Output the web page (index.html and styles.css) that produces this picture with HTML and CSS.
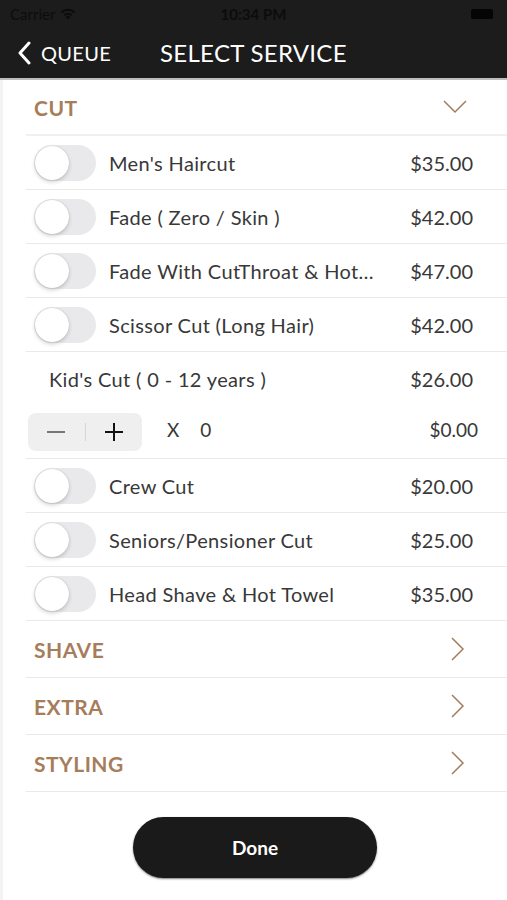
FILE: index.html
```html
<!DOCTYPE html>
<html lang="en">
<head>
    <meta charset="UTF-8">
    <title>Select Service</title>
    <link rel="stylesheet" href="styles.css">
</head>
<body>
    <div class="topbar">
        <div class="status">
            <span class="carrier">Carrier
                <svg class="wifi" width="16" height="12" viewBox="0 0 16 12"><path d="M8 11.5l2.2-2.6a3.2 3.2 0 0 0-4.4 0z M3.6 6.6l1.4 1.5a4.3 4.3 0 0 1 6 0l1.4-1.5a6.4 6.4 0 0 0-8.8 0z M0.8 3.7l1.4 1.5a8.3 8.3 0 0 1 11.6 0l1.4-1.5a10.4 10.4 0 0 0-14.4 0z" fill="#0c0c0c"/></svg>
            </span>
            <span class="clock">10:34 PM</span>
            <span class="battery"></span>
        </div>
        <div class="nav">
            <div class="back">
                <svg width="14" height="24" viewBox="0 0 14 24"><path d="M12 2L3 12l9 10" fill="none" stroke="#fff" stroke-width="3" stroke-linecap="round" stroke-linejoin="round"/></svg>
                <span>QUEUE</span>
            </div>
            <div class="nav-title">SELECT SERVICE</div>
        </div>
    </div>

    <div class="content">
        <div class="list">
            <div class="section">
                <span>CUT</span>
                <svg class="chev" width="24" height="14" viewBox="0 0 24 14"><path d="M1 1l11 11L23 1" fill="none" stroke="#a67d5b" stroke-width="1.5"/></svg>
            </div>

            <div class="item"><span class="switch"></span><span class="name">Men's Haircut</span><span class="price">$35.00</span></div>
            <div class="item"><span class="switch"></span><span class="name">Fade ( Zero / Skin )</span><span class="price">$42.00</span></div>
            <div class="item"><span class="switch"></span><span class="name">Fade With CutThroat &amp; Hot…</span><span class="price">$47.00</span></div>
            <div class="item"><span class="switch"></span><span class="name">Scissor Cut (Long Hair)</span><span class="price">$42.00</span></div>

            <div class="kids">
                <div class="kids-head"><span class="name">Kid's Cut ( 0 - 12 years )</span><span class="price">$26.00</span></div>
                <div class="kids-qty">
                    <div class="stepper">
                        <span class="minus"></span>
                        <span class="divider"></span>
                        <span class="plus"></span>
                    </div>
                    <span class="times">X</span>
                    <span class="count">0</span>
                    <span class="total">$0.00</span>
                </div>
            </div>

            <div class="item"><span class="switch"></span><span class="name">Crew Cut</span><span class="price">$20.00</span></div>
            <div class="item"><span class="switch"></span><span class="name">Seniors/Pensioner Cut</span><span class="price">$25.00</span></div>
            <div class="item"><span class="switch"></span><span class="name">Head Shave &amp; Hot Towel</span><span class="price">$35.00</span></div>

            <div class="section">
                <span>SHAVE</span>
                <svg class="chev-r" width="14" height="24" viewBox="0 0 14 24"><path d="M1 1l11 11L1 23" fill="none" stroke="#a67d5b" stroke-width="1.5"/></svg>
            </div>
            <div class="section">
                <span>EXTRA</span>
                <svg class="chev-r" width="14" height="24" viewBox="0 0 14 24"><path d="M1 1l11 11L1 23" fill="none" stroke="#a67d5b" stroke-width="1.5"/></svg>
            </div>
            <div class="section">
                <span>STYLING</span>
                <svg class="chev-r" width="14" height="24" viewBox="0 0 14 24"><path d="M1 1l11 11L1 23" fill="none" stroke="#a67d5b" stroke-width="1.5"/></svg>
            </div>
        </div>

        <div class="footer">
            <button class="done">Done</button>
        </div>
    </div>
</body>
</html>
```

FILE: styles.css
```css
* {
    margin: 0;
    padding: 0;
    box-sizing: border-box;
    font-family: 'Lato', 'Noto Sans', sans-serif;
}

body {
    width: 507px;
    height: 900px;
    background: #fff;
    overflow: hidden;
}

.topbar {
    background: #1c1c1c;
    border-bottom: 2px solid #bdbdbd;
}

.status {
    height: 27px;
    display: flex;
    align-items: center;
    justify-content: space-between;
    padding: 0 10px;
    color: #0c0c0c;
    font-size: 15px;
}

.carrier {
    display: flex;
    align-items: center;
    gap: 5px;
    width: 110px;
}

.clock {
    font-weight: bold;
}

.battery {
    width: 110px;
    display: flex;
    justify-content: flex-end;
}

.battery::after {
    content: '';
    width: 22px;
    height: 10px;
    background: #050505;
    border-radius: 2px;
    margin-right: 4px;
}

.nav {
    height: 51px;
    display: flex;
    align-items: center;
    color: #fff;
    padding-left: 17px;
}

.back {
    display: flex;
    align-items: center;
    gap: 10px;
    font-size: 20px;
    letter-spacing: 0.3px;
    width: 143px;
}

.nav-title {
    font-size: 24px;
    letter-spacing: 0.3px;
}

.content {
    border-left: 3px solid #f3f3f3;
    height: 821px;
}

.list {
    padding-left: 23px;
}

.section {
    height: 57px;
    display: flex;
    align-items: center;
    justify-content: space-between;
    padding: 0 42px 0 8px;
    border-bottom: 1px solid #e9e9e9;
    color: #a67d5b;
    font-size: 21px;
    font-weight: bold;
    letter-spacing: 0.5px;
}

.section:first-child {
    height: 56px;
    border-bottom-width: 2px;
    border-bottom-color: #f0f0f0;
}

.chev {
    margin-right: -2px;
}

.item,
.kids-head,
.kids-qty {
    display: flex;
    align-items: center;
    font-size: 20px;
    color: #383838;
}

.item {
    height: 54px;
    padding: 0 34px 0 8px;
    border-bottom: 1px solid #e9e9e9;
}

.switch {
    width: 62px;
    height: 36px;
    border-radius: 18px;
    background: #e9e9eb;
    position: relative;
    flex-shrink: 0;
    margin-right: 13px;
}

.switch::after {
    content: '';
    position: absolute;
    left: 1px;
    top: 1px;
    width: 34px;
    height: 34px;
    border-radius: 50%;
    background: #fff;
    box-shadow: 0 2px 4px rgba(0,0,0,0.18), 0 0 1px rgba(0,0,0,0.2);
}

.name {
    flex: 1;
    white-space: nowrap;
    padding-right: 16px;
    letter-spacing: 0.35px;
}

.price {
    flex-shrink: 0;
}

.kids {
    border-bottom: 1px solid #e9e9e9;
}

.kids-head {
    height: 54px;
    padding: 0 34px 0 23px;
}

.kids-qty {
    height: 52px;
    padding: 0 29px 0 2px;
    align-items: flex-start;
}

.stepper {
    width: 114px;
    height: 38px;
    background: #efeff0;
    border-radius: 8px;
    display: flex;
    align-items: center;
    margin-top: 7px;
    margin-right: 25px;
}

.minus,
.plus {
    flex: 1;
    height: 100%;
    position: relative;
}

.minus::before,
.plus::before,
.plus::after {
    content: '';
    position: absolute;
    left: 50%;
    top: 50%;
}

.minus::before {
    width: 18px;
    height: 2px;
    margin: -1px 0 0 -9px;
    background: #777;
}

.plus::before {
    width: 18px;
    height: 2px;
    margin: -1px 0 0 -9px;
    background: #111;
}

.plus::after {
    width: 2px;
    height: 18px;
    margin: -9px 0 0 -1px;
    background: #111;
}

.divider {
    width: 1px;
    height: 18px;
    background: #d6d6d6;
}

.times,
.count,
.total {
    font-size: 19px;
    line-height: 40px;
    margin-top: 4px;
}

.times {
    margin-right: 21px;
}

.count {
    flex: 1;
}

.footer {
    display: flex;
    justify-content: center;
    padding-top: 25px;
}

.done {
    width: 244px;
    height: 61px;
    border-radius: 31px;
    border: none;
    background: #1a1a1a;
    color: #fff;
    font-size: 19px;
    font-weight: bold;
    box-shadow: 0 1px 2px rgba(0,0,0,0.5);
}
```
